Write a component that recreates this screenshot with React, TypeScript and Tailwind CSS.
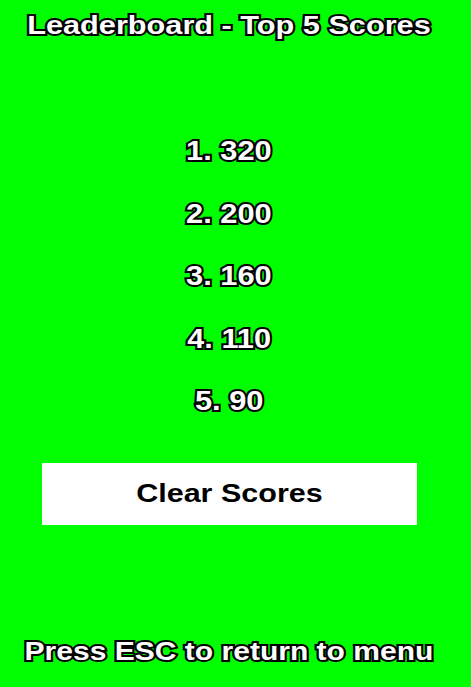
const scores = [320, 200, 160, 110, 90];

const outlined =
  "text-white [-webkit-text-stroke:4px_black] [paint-order:stroke_fill]";

export default function App() {
  return (
    <div className="flex h-[687px] w-[471px] flex-col items-center bg-[#00ff00] pr-[13px] font-['Liberation_Sans',Arial,sans-serif] font-bold">
      <h1 className={`mt-[8px] scale-x-[1.18] text-[26px] leading-[34px] ${outlined}`}>
        Leaderboard - Top 5 Scores
      </h1>
      <ul className="mt-[90px] flex flex-col items-center gap-[25.5px]">
        {scores.map((s, i) => (
          <li key={i} className={`scale-x-[1.1] text-[28px] leading-[37px] ${outlined}`}>
            {i + 1}. {s}
          </li>
        ))}
      </ul>
      <button className="mt-[44px] h-[62px] w-[375px] bg-white text-black">
        <span className="inline-block scale-x-[1.22] text-[25px]">Clear Scores</span>
      </button>
      <p className={`mt-auto mb-[19px] scale-x-[1.155] text-[26px] leading-[34px] ${outlined}`}>
        Press ESC to return to menu
      </p>
    </div>
  );
}
